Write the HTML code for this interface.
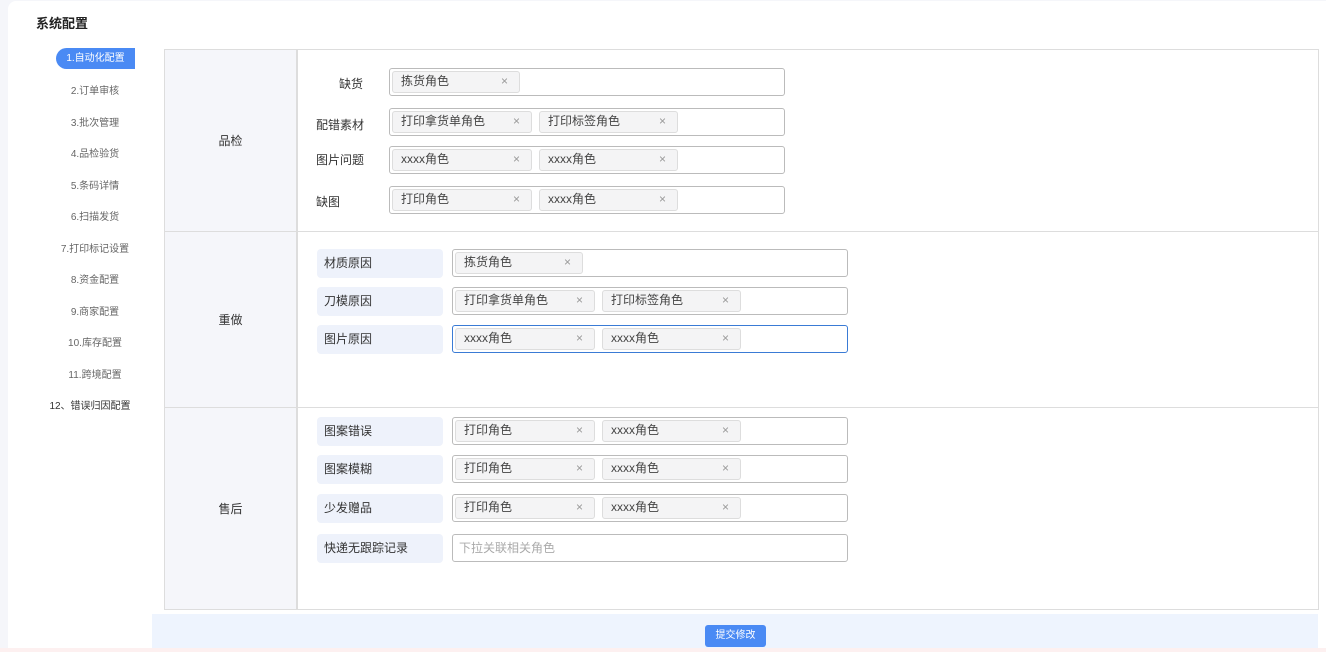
<!DOCTYPE html>
<html><head><meta charset="utf-8"><style>
*{margin:0;padding:0;box-sizing:border-box}
body{width:1326px;height:652px;background:#f5f6fa;font-family:"Liberation Sans","Noto Sans CJK SC",sans-serif;position:relative;overflow:hidden;color:#333}
.card{position:absolute;left:8px;top:1px;width:1318px;height:648px;background:#fff;border-radius:8px 0 0 0}
.pink{position:absolute;left:0;top:648px;width:1326px;height:4px;background:#fdf0f0}
.title{position:absolute;left:36px;top:13px;font-size:13px;font-weight:bold;color:#222}
.nav{position:absolute;font-size:10px;color:#666;width:120px;text-align:center;left:35px}
.act{position:absolute;left:56px;top:48px;width:79px;height:21px;background:#4a8af4;border-radius:11px 0 0 11px;color:#fff;font-size:10px;line-height:21px;text-align:center}
.sec{position:absolute;left:164px;width:1155px;border:1px solid #ddd;background:#fff}
.sec .h{position:absolute;left:0;top:0;bottom:0;width:133px;background:#f5f6fa;border-right:2px solid #ddd;font-size:12px;display:flex;align-items:center;justify-content:center}
.lab{position:absolute;font-size:12px;color:#333}
.lb{position:absolute;left:317px;width:126px;height:29px;background:#eef2fb;border-radius:4px;font-size:12px;line-height:29px;padding-left:7px}
.in{position:absolute;height:28px;border:1px solid #bbb;border-radius:3px;background:#fff}
.tag{position:absolute;top:2px;height:22px;background:#f4f4f5;border:1px solid #ddd;border-radius:3px;font-size:12px;line-height:19px;padding-left:8px;color:#444}
.tag i{position:absolute;right:11px;top:0;font-style:normal;color:#999;font-size:12px}
.bar{position:absolute;left:152px;top:614px;width:1166px;height:34px;background:#eef4fe}
.btn{position:absolute;left:705px;top:625px;width:61px;height:22px;background:#4a8af4;border-radius:3px;color:#fff;font-size:10px;line-height:22px;text-align:center}
</style></head><body>
<div class="card"></div>
<div class="pink"></div>
<div class="title">系统配置</div>
<div class="act">1.自动化配置</div>
<div class="nav" style="top:82px">2.订单审核</div>
<div class="nav" style="top:114px">3.批次管理</div>
<div class="nav" style="top:145px">4.品检验货</div>
<div class="nav" style="top:177px">5.条码详情</div>
<div class="nav" style="top:208px">6.扫描发货</div>
<div class="nav" style="top:240px">7.打印标记设置</div>
<div class="nav" style="top:271px">8.资金配置</div>
<div class="nav" style="top:303px">9.商家配置</div>
<div class="nav" style="top:334px">10.库存配置</div>
<div class="nav" style="top:366px">11.跨境配置</div>
<div class="nav" style="top:397px;left:30px;color:#333">12、错误归因配置</div>

<div class="sec" style="top:49px;height:183px"><div class="h">品检</div></div>
<div class="sec" style="top:231px;height:177px"><div class="h">重做</div></div>
<div class="sec" style="top:407px;height:203px"><div class="h">售后</div></div>

<div class="lab" style="left:339px;top:75px">缺货</div>
<div class="in" style="left:389px;top:68px;width:396px"><div class="tag" style="left:2px;width:128px">拣货角色<i>×</i></div></div>
<div class="lab" style="left:316px;top:116px">配错素材</div>
<div class="in" style="left:389px;top:108px;width:396px"><div class="tag" style="left:2px;width:140px">打印拿货单角色<i>×</i></div><div class="tag" style="left:149px;width:139px">打印标签角色<i>×</i></div></div>
<div class="lab" style="left:316px;top:151px">图片问题</div>
<div class="in" style="left:389px;top:146px;width:396px"><div class="tag" style="left:2px;width:140px">xxxx角色<i>×</i></div><div class="tag" style="left:149px;width:139px">xxxx角色<i>×</i></div></div>
<div class="lab" style="left:316px;top:193px">缺图</div>
<div class="in" style="left:389px;top:186px;width:396px"><div class="tag" style="left:2px;width:140px">打印角色<i>×</i></div><div class="tag" style="left:149px;width:139px">xxxx角色<i>×</i></div></div>

<div class="lb" style="top:249px">材质原因</div>
<div class="in" style="left:452px;top:249px;width:396px"><div class="tag" style="left:2px;width:128px">拣货角色<i>×</i></div></div>
<div class="lb" style="top:287px">刀模原因</div>
<div class="in" style="left:452px;top:287px;width:396px"><div class="tag" style="left:2px;width:140px">打印拿货单角色<i>×</i></div><div class="tag" style="left:149px;width:139px">打印标签角色<i>×</i></div></div>
<div class="lb" style="top:325px">图片原因</div>
<div class="in" style="left:452px;top:325px;width:396px;border-color:#3a7bd5"><div class="tag" style="left:2px;width:140px">xxxx角色<i>×</i></div><div class="tag" style="left:149px;width:139px">xxxx角色<i>×</i></div></div>

<div class="lb" style="top:417px">图案错误</div>
<div class="in" style="left:452px;top:417px;width:396px"><div class="tag" style="left:2px;width:140px">打印角色<i>×</i></div><div class="tag" style="left:149px;width:139px">xxxx角色<i>×</i></div></div>
<div class="lb" style="top:455px">图案模糊</div>
<div class="in" style="left:452px;top:455px;width:396px"><div class="tag" style="left:2px;width:140px">打印角色<i>×</i></div><div class="tag" style="left:149px;width:139px">xxxx角色<i>×</i></div></div>
<div class="lb" style="top:494px">少发赠品</div>
<div class="in" style="left:452px;top:494px;width:396px"><div class="tag" style="left:2px;width:140px">打印角色<i>×</i></div><div class="tag" style="left:149px;width:139px">xxxx角色<i>×</i></div></div>
<div class="lb" style="top:534px">快递无跟踪记录</div>
<div class="in" style="left:452px;top:534px;width:396px;font-size:12px;color:#aaa;line-height:26px;padding-left:6px">下拉关联相关角色</div>

<div class="bar"></div>
<div class="btn">提交修改</div>
</body></html>
